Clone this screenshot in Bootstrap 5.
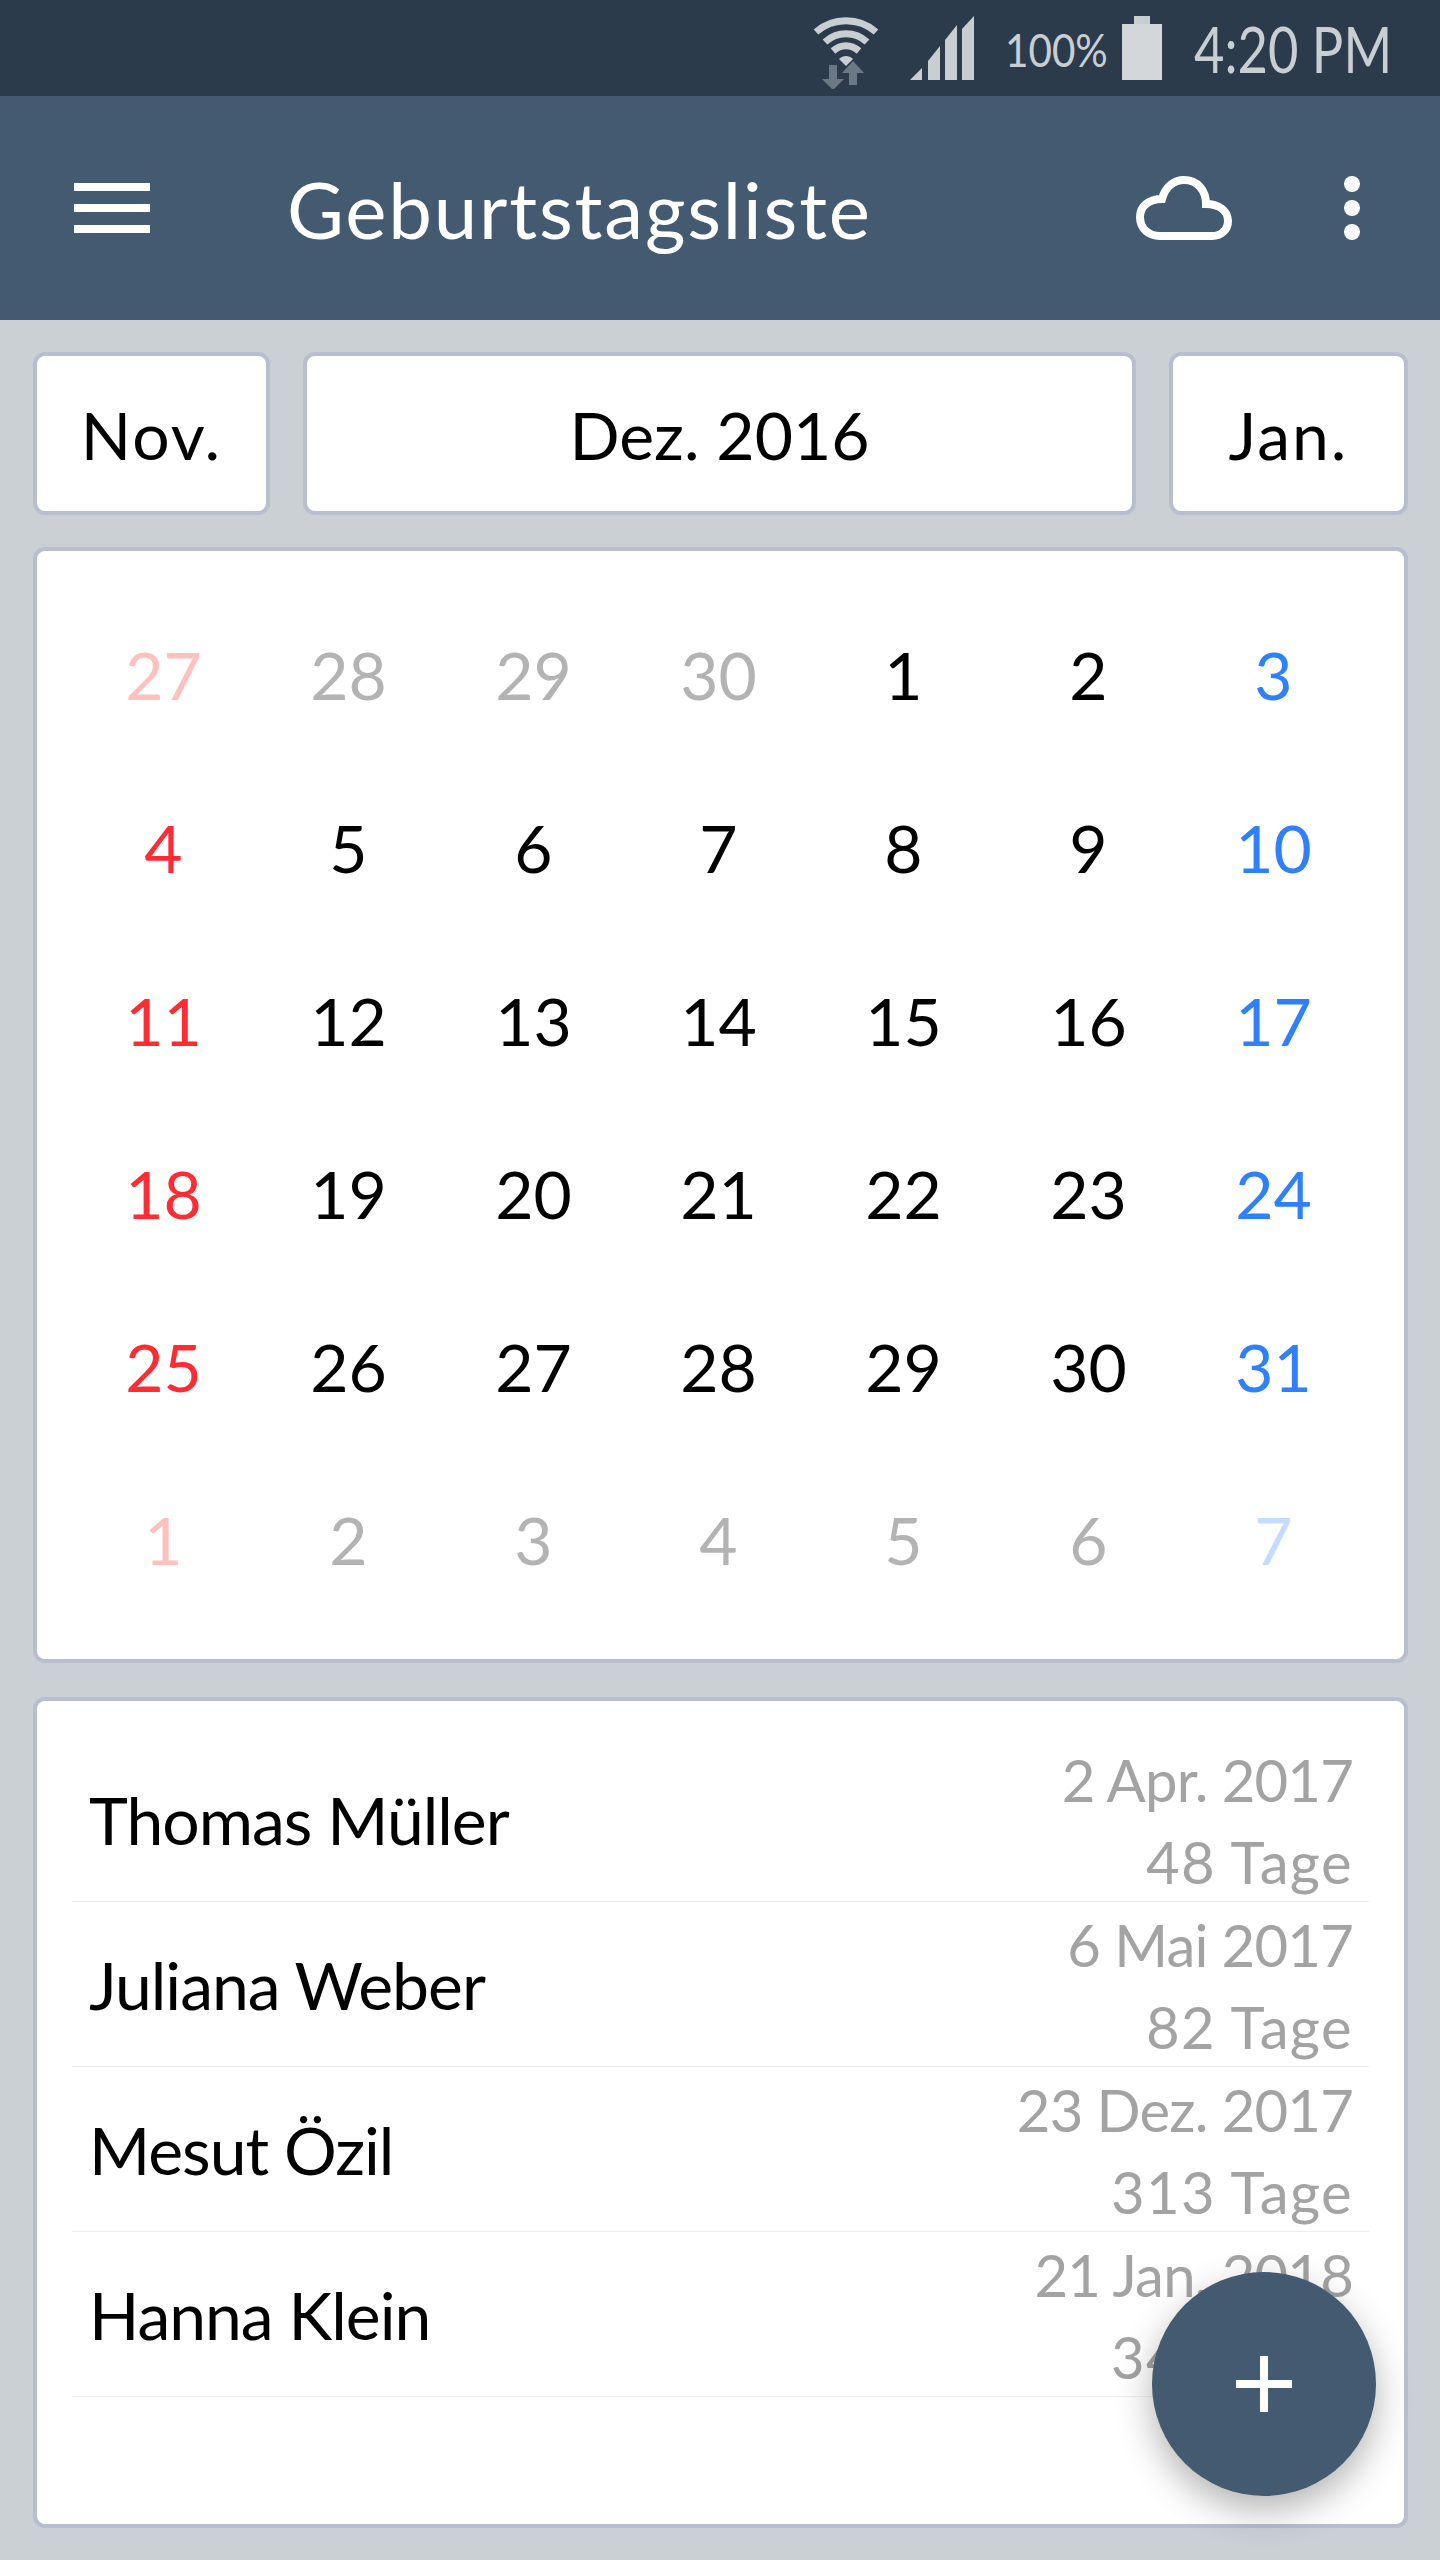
<!doctype html>
<html lang="de">
<head>
<meta charset="utf-8">
<title>Geburtstagsliste</title>
<link href="https://cdn.jsdelivr.net/npm/bootstrap@5.3.0/dist/css/bootstrap.min.css" rel="stylesheet">
<style>
html,body{margin:0;height:2560px;overflow:hidden}
body{background:#cbd0d4;font-family:"Lato","Liberation Sans",sans-serif;color:#000}
.app-shell{width:1440px;height:2560px}
.status-strip{height:96px;background:#2c3b4c;color:#c9ced3;padding-right:45px}
.wifi-ico{width:66px;height:72px;margin-right:31px;margin-top:10px}
.signal-ico{width:64px;height:64px;margin-right:31px}
.pct-text{display:inline-block;white-space:nowrap;font-size:47px;line-height:1;margin-right:14px;padding-top:2px;width:103px;transform:scaleX(.86);transform-origin:left center}
.batt-ico{width:40px;height:64px;margin-right:32px}
.clock-text{display:inline-block;white-space:nowrap;width:201px;font-size:64px;line-height:1;padding-top:2px;transform:scaleX(.82);transform-origin:left center}
.top-bar{height:224px;background:#445a70;color:#fff;padding-left:74px}
.menu-ico{width:76px;height:50px;margin-right:137px}
.bar-title{font-size:78px;line-height:1;letter-spacing:1.8px;padding-top:2px}
.cloud-ico{width:96px;height:64px}
.dots-ico{width:16px;height:64px;margin-left:112px;margin-right:80px}
.month-row{padding:32px 32px 0 33px;gap:33px}
.month-btn{height:163px;background:#fff;border:4px solid #b7becd;border-radius:12px;color:#000;font-size:66px;line-height:1;padding:3px 0 0}
.month-btn:hover{background:#fff;border-color:#b7becd;color:#000}
.side-btn{flex:0 0 auto;letter-spacing:2px}
.side-left{width:237px}
.side-right{width:239px}
.mid-btn{flex:1 1 auto}
.panel{margin:34px 32px 0 33px;background:#fff;border:4px solid #b7becd;border-radius:12px}
.cal-panel{margin-top:32px;height:1116px;padding:37px 34px 0}
.day-grid{display:grid;grid-template-columns:repeat(7,185px);grid-auto-rows:173px}
.day-cell{font-size:66px;line-height:173px;text-align:center}
.dim{color:#b3b3b3}.sun{color:#ff2d33}.sat{color:#2e80ff}.sun-dim{color:#ffc0c0}.sat-dim{color:#c3dcff}
.list-panel{height:831px;padding:36px 35px 0}
.bday-row{height:165px;border-bottom:1px solid #eee;padding:0 16px 0 17px}
.bday-name{font-size:66px;line-height:1;letter-spacing:-1px;padding-top:2px}
.bday-meta{font-size:58px;line-height:82px;color:#a3a3a3;text-align:right;padding-top:4px}
.meta-date{display:block;letter-spacing:-.8px}
.meta-days{display:block;letter-spacing:1.4px}
.fab{left:1152px;top:2272px;width:224px;height:224px;background:#445a70;box-shadow:0 14px 36px rgba(0,0,0,.3)}
.fab svg{width:56px;height:56px}
</style>
</head>
<body>
<div class="app-shell position-relative">
  <div class="status-strip d-flex align-items-center justify-content-end">
    <svg class="wifi-ico" viewBox="0 0 66 72" fill="none">
      <g stroke="#c9ced3" stroke-width="7"><path d="M3 15C20 0 46 0 63 15"/><path d="M12 25C24 14 42 14 54 25"/><path d="M20 34C28 27 38 27 46 34"/></g>
      <path d="M26 42C30 38 36 38 40 42L33 49Z" fill="#c9ced3"/>
      <path d="M16 48h8v14h7L20 73 9 62h7Z" fill="#6b7885"/><path d="M36 68h8V56h7L40 44 29 56h7Z" fill="#6b7885"/>
    </svg>
    <svg class="signal-ico" viewBox="0 0 64 64" fill="#c9ced3"><path d="M0 64 12 52V64Z"/><path d="M18 64V45L30 30V64Z"/><path d="M35 64V24L47 9V64Z"/><path d="M52 64V13L64 0V64Z"/></svg>
    <span class="pct-text">100%</span>
    <svg class="batt-ico" viewBox="0 0 40 64"><rect x="12" width="16" height="8" fill="#c9ced3"/><rect y="8" width="40" height="56" fill="#d3d7da"/></svg>
    <span class="clock-text">4:20 PM</span>
  </div>
  <div class="top-bar d-flex align-items-center">
    <svg class="menu-ico" viewBox="0 0 76 50" fill="#fff"><rect width="76" height="8"/><rect y="21" width="76" height="8"/><rect y="42" width="76" height="8"/></svg>
    <span class="bar-title flex-grow-1">Geburtstagsliste</span>
    <svg class="cloud-ico" viewBox="0 0 96 64" fill="none"><path d="M24 60C12 60 4 52 4 41C4 30 13 23 26 23C29 11 38 4 48 4C61 4 70 14 70 28C82 28 92 34 92 45C92 54 85 60 76 60Z" stroke="#fff" stroke-width="8"/></svg>
    <svg class="dots-ico" viewBox="0 0 16 64" fill="#fff"><circle cx="8" cy="8" r="8"/><circle cx="8" cy="32" r="8"/><circle cx="8" cy="56" r="8"/></svg>
  </div>
  <div class="month-row d-flex">
    <button type="button" class="btn month-btn side-btn side-left">Nov.</button>
    <button type="button" class="btn month-btn mid-btn">Dez. 2016</button>
    <button type="button" class="btn month-btn side-btn side-right">Jan.</button>
  </div>
  <div class="panel cal-panel">
    <div class="day-grid">
      <div class="day-cell sun-dim">27</div><div class="day-cell dim">28</div><div class="day-cell dim">29</div><div class="day-cell dim">30</div><div class="day-cell">1</div><div class="day-cell">2</div><div class="day-cell sat">3</div>
      <div class="day-cell sun">4</div><div class="day-cell">5</div><div class="day-cell">6</div><div class="day-cell">7</div><div class="day-cell">8</div><div class="day-cell">9</div><div class="day-cell sat">10</div>
      <div class="day-cell sun">11</div><div class="day-cell">12</div><div class="day-cell">13</div><div class="day-cell">14</div><div class="day-cell">15</div><div class="day-cell">16</div><div class="day-cell sat">17</div>
      <div class="day-cell sun">18</div><div class="day-cell">19</div><div class="day-cell">20</div><div class="day-cell">21</div><div class="day-cell">22</div><div class="day-cell">23</div><div class="day-cell sat">24</div>
      <div class="day-cell sun">25</div><div class="day-cell">26</div><div class="day-cell">27</div><div class="day-cell">28</div><div class="day-cell">29</div><div class="day-cell">30</div><div class="day-cell sat">31</div>
      <div class="day-cell sun-dim">1</div><div class="day-cell dim">2</div><div class="day-cell dim">3</div><div class="day-cell dim">4</div><div class="day-cell dim">5</div><div class="day-cell dim">6</div><div class="day-cell sat-dim">7</div>
    </div>
  </div>
  <div class="panel list-panel">
    <div class="bday-row d-flex align-items-center justify-content-between"><span class="bday-name">Thomas Müller</span><div class="bday-meta"><span class="meta-date">2 Apr. 2017</span><span class="meta-days">48 Tage</span></div></div>
    <div class="bday-row d-flex align-items-center justify-content-between"><span class="bday-name">Juliana Weber</span><div class="bday-meta"><span class="meta-date">6 Mai 2017</span><span class="meta-days">82 Tage</span></div></div>
    <div class="bday-row d-flex align-items-center justify-content-between"><span class="bday-name">Mesut Özil</span><div class="bday-meta"><span class="meta-date">23 Dez. 2017</span><span class="meta-days">313 Tage</span></div></div>
    <div class="bday-row d-flex align-items-center justify-content-between"><span class="bday-name">Hanna Klein</span><div class="bday-meta"><span class="meta-date">21 Jan. 2018</span><span class="meta-days">342 Tage</span></div></div>
  </div>
  <div class="fab position-absolute rounded-circle d-flex align-items-center justify-content-center">
    <svg viewBox="0 0 56 56" fill="#fff"><rect x="24" width="8" height="56"/><rect y="24" width="56" height="8"/></svg>
  </div>
</div>
<script src="https://cdn.jsdelivr.net/npm/bootstrap@5.3.0/dist/js/bootstrap.bundle.min.js"></script>
</body>
</html>
